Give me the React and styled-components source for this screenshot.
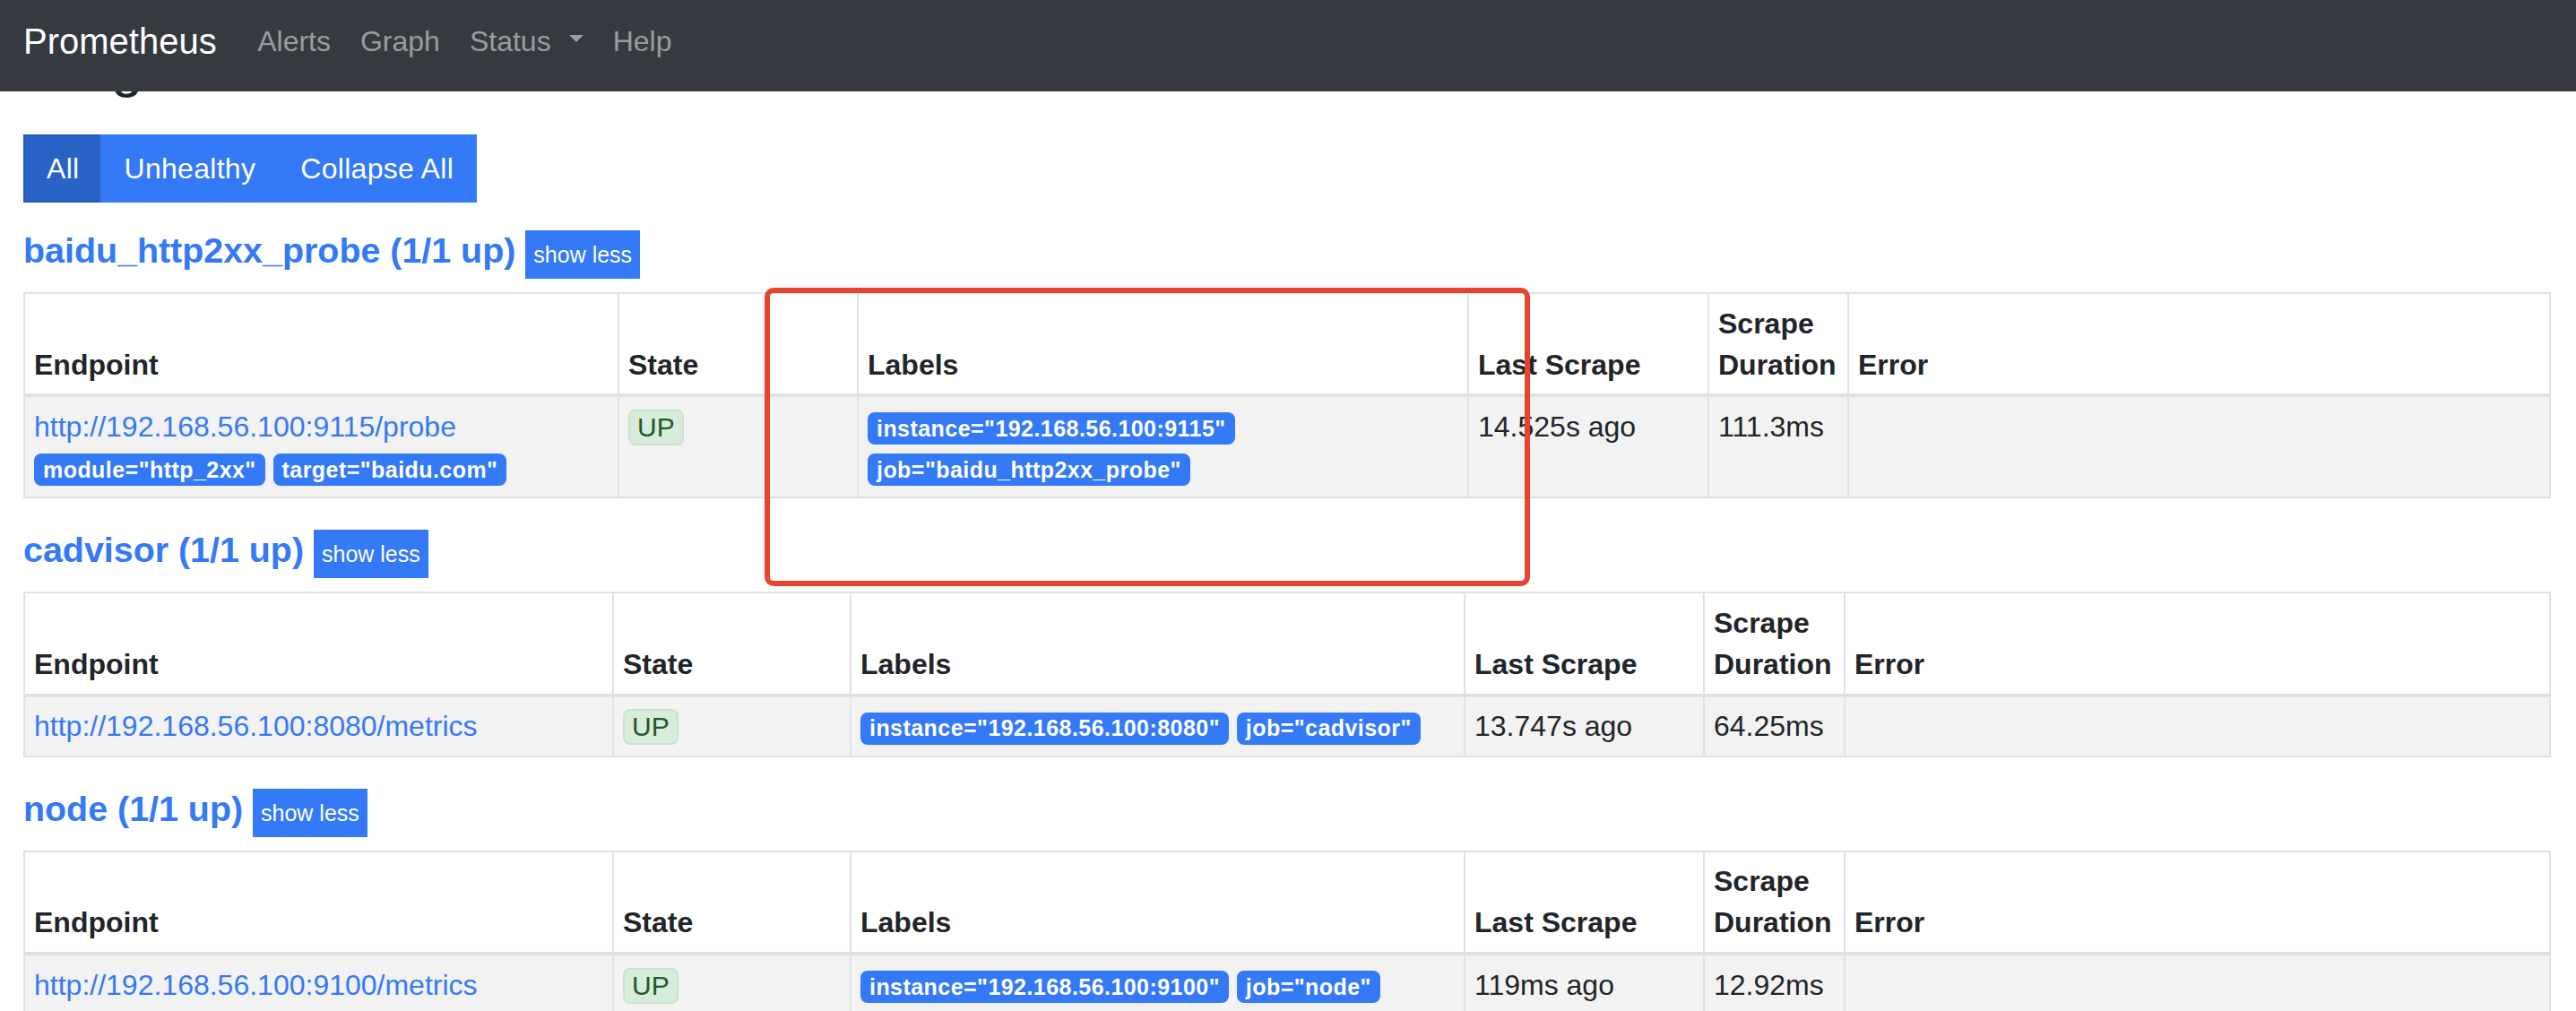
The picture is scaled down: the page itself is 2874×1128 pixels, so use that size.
import React from 'react'
// styled components
import styled, { createGlobalStyle } from 'styled-components';

const GlobalStyle = createGlobalStyle`
    * { box-sizing: border-box; }
    html, body {
        margin: 0;
        padding: 0;
        background: #fff;
    }
    body {
        font-family: "Liberation Sans", Arial, sans-serif;
        font-size: 32px;
        line-height: 1.5;
        color: #212529;
    }
`;

const Page = styled.div`
    position: relative;
    width: 2874px;
    height: 1128px;
    overflow: hidden;
`;

// top bar
const Navbar = styled.nav`
    position: relative;
    z-index: 2;
    height: 102px;
    padding: 0 26px 10px;
    display: flex;
    align-items: center;
    background: #343a40;
`;

const Brand = styled.a`
    font-size: 40px;
    line-height: 60px;
    color: #fff;
    margin-right: 29px;
    text-decoration: none;
`;

const NavLink = styled.a`
    padding: 0 16.5px;
    font-size: 32px;
    line-height: 48px;
    color: rgba(255, 255, 255, .5);
    text-decoration: none;
`;

const Caret = styled.span`
    display: inline-block;
    margin-left: 20px;
    vertical-align: 10px;
    border-top: 8px solid currentColor;
    border-left: 8.5px solid transparent;
    border-right: 8.5px solid transparent;
`;

const Main = styled.main`
    padding: 0 28px 0 26px;
`;

// page title, mostly hidden under the bar
const Title = styled.h2`
    margin: -66px 0 37px;
    font-size: 64px;
    line-height: 77px;
    font-weight: 500;
    letter-spacing: 3px;
`;

const ButtonGroup = styled.div`
    display: flex;
    width: fit-content;
    margin-bottom: 30px;
`;

const GroupButton = styled.button`
    font-family: inherit;
    font-size: 32px;
    line-height: 48px;
    letter-spacing: .3px;
    padding: 12px 24px;
    margin-left: ${p => p.$first ? '0' : '-2px'};
    border: 2px solid ${p => p.$active ? '#2459b9' : '#3479f6'};
    background: ${p => p.$active ? '#2863c5' : '#3479f6'};
    color: #fff;
    border-radius: 0;
`;

// scrape pool
const PoolTitle = styled.h3`
    margin: 0 0 15px;
    font-size: 39.4px;
    line-height: 47px;
    font-weight: 700;
`;

const PoolLink = styled.a`
    color: #3479f6;
    text-decoration: none;
`;

const SmallButton = styled.button`
    display: inline-block;
    font-family: inherit;
    font-size: 25px;
    font-weight: 400;
    line-height: 36px;
    padding: 8px 8px;
    border: 1px solid #3479f6;
    background: #3479f6;
    color: #fff;
    border-radius: 0;
`;

const Table = styled.table`
    width: 100%;
    table-layout: fixed;
    border-collapse: collapse;
    margin-bottom: 34px;
    font-size: 32px;
    line-height: 46px;
`;

const Col = styled.col`
    width: ${p => p.$w ? `${p.$w}px` : 'auto'};
`;

const Th = styled.th`
    text-align: left;
    vertical-align: bottom;
    padding: 9.6px 10px;
    border: 2px solid #dee2e6;
    border-bottom-width: 4px;
    font-weight: 700;
`;

const BodyRow = styled.tr`
    background: #f2f2f2;
`;

const Td = styled.td`
    vertical-align: top;
    padding: 9.6px 10px;
    border: 2px solid #dee2e6;
`;

const EndpointLink = styled.a`
    color: #3479f6;
    text-decoration: none;
`;

const BadgeLine = styled.div`
    line-height: 46px;
`;

const Badge = styled.span`
    display: inline-block;
    padding: 5.5px 10px;
    font-size: 25px;
    font-weight: 700;
    line-height: 25px;
    letter-spacing: .45px;
    color: #fff;
    background: #3479f6;
    border-radius: 8px;
    white-space: nowrap;
`;

const StateBadge = styled.span`
    display: inline-block;
    padding: 0 8px;
    font-size: 30px;
    line-height: 36px;
    text-transform: uppercase;
    color: #1e5a27;
    background: #d8ecdb;
    border: 2px solid #c6e5cc;
    border-radius: 8px;
`;

// red mark drawn over the screenshot
const Annotation = styled.div`
    position: absolute;
    left: 853px;
    top: 321px;
    width: 854px;
    height: 333px;
    border: 6px solid #e8432f;
    border-radius: 10px;
    pointer-events: none;
`;

const pools = [
    {
        name: 'baidu_http2xx_probe',
        health: '1/1 up',
        widths: [663, 267, 681, 268, 156],
        targets: [{
            endpoint: 'http://192.168.56.100:9115/probe',
            params: ['module="http_2xx"', 'target="baidu.com"'],
            labels: ['instance="192.168.56.100:9115"', 'job="baidu_http2xx_probe"'],
            state: 'up',
            lastScrape: '14.525s ago',
            duration: '111.3ms',
        }],
    },
    {
        name: 'cadvisor',
        health: '1/1 up',
        widths: [657, 265, 685, 267, 157],
        targets: [{
            endpoint: 'http://192.168.56.100:8080/metrics',
            params: [],
            labels: ['instance="192.168.56.100:8080"', 'job="cadvisor"'],
            state: 'up',
            lastScrape: '13.747s ago',
            duration: '64.25ms',
        }],
    },
    {
        name: 'node',
        health: '1/1 up',
        widths: [657, 265, 685, 267, 157],
        targets: [{
            endpoint: 'http://192.168.56.100:9100/metrics',
            params: [],
            labels: ['instance="192.168.56.100:9100"', 'job="node"'],
            state: 'up',
            lastScrape: '119ms ago',
            duration: '12.92ms',
        }],
    },
];

const Badges = ({ items }) => items.map((l, i) => (
    <React.Fragment key={l}>{i > 0 && ' '}<Badge>{l}</Badge></React.Fragment>
));

const ScrapePool = ({ pool }) => (
    <section>
        <PoolTitle>
            <PoolLink href="#">{pool.name} ({pool.health})</PoolLink>{' '}
            <SmallButton>show less</SmallButton>
        </PoolTitle>
        <Table>
            <colgroup>
                {pool.widths.map((w, i) => <Col key={i} $w={w} />)}
                <Col />
            </colgroup>
            <thead>
                <tr>
                    <Th>Endpoint</Th>
                    <Th>State</Th>
                    <Th>Labels</Th>
                    <Th>Last Scrape</Th>
                    <Th>Scrape Duration</Th>
                    <Th>Error</Th>
                </tr>
            </thead>
            <tbody>
                {pool.targets.map(t => (
                    <BodyRow key={t.endpoint}>
                        <Td>
                            <EndpointLink href="#">{t.endpoint}</EndpointLink>
                            {t.params.length > 0 && (
                                <BadgeLine><Badges items={t.params} /></BadgeLine>
                            )}
                        </Td>
                        <Td><StateBadge>{t.state}</StateBadge></Td>
                        <Td><Badges items={t.labels} /></Td>
                        <Td>{t.lastScrape}</Td>
                        <Td>{t.duration}</Td>
                        <Td></Td>
                    </BodyRow>
                ))}
            </tbody>
        </Table>
    </section>
);

const App = () => {
    return (
        <Page>
            <GlobalStyle />
            <Navbar>
                <Brand href="#">Prometheus</Brand>
                <NavLink href="#">Alerts</NavLink>
                <NavLink href="#">Graph</NavLink>
                <NavLink href="#">Status<Caret /></NavLink>
                <NavLink href="#">Help</NavLink>
            </Navbar>
            <Main>
                <Title>Targets</Title>
                <ButtonGroup>
                    <GroupButton $first $active>All</GroupButton>
                    <GroupButton>Unhealthy</GroupButton>
                    <GroupButton>Collapse All</GroupButton>
                </ButtonGroup>
                {pools.map(p => <ScrapePool key={p.name} pool={p} />)}
            </Main>
            <Annotation />
        </Page>
    )
}

export default App;
